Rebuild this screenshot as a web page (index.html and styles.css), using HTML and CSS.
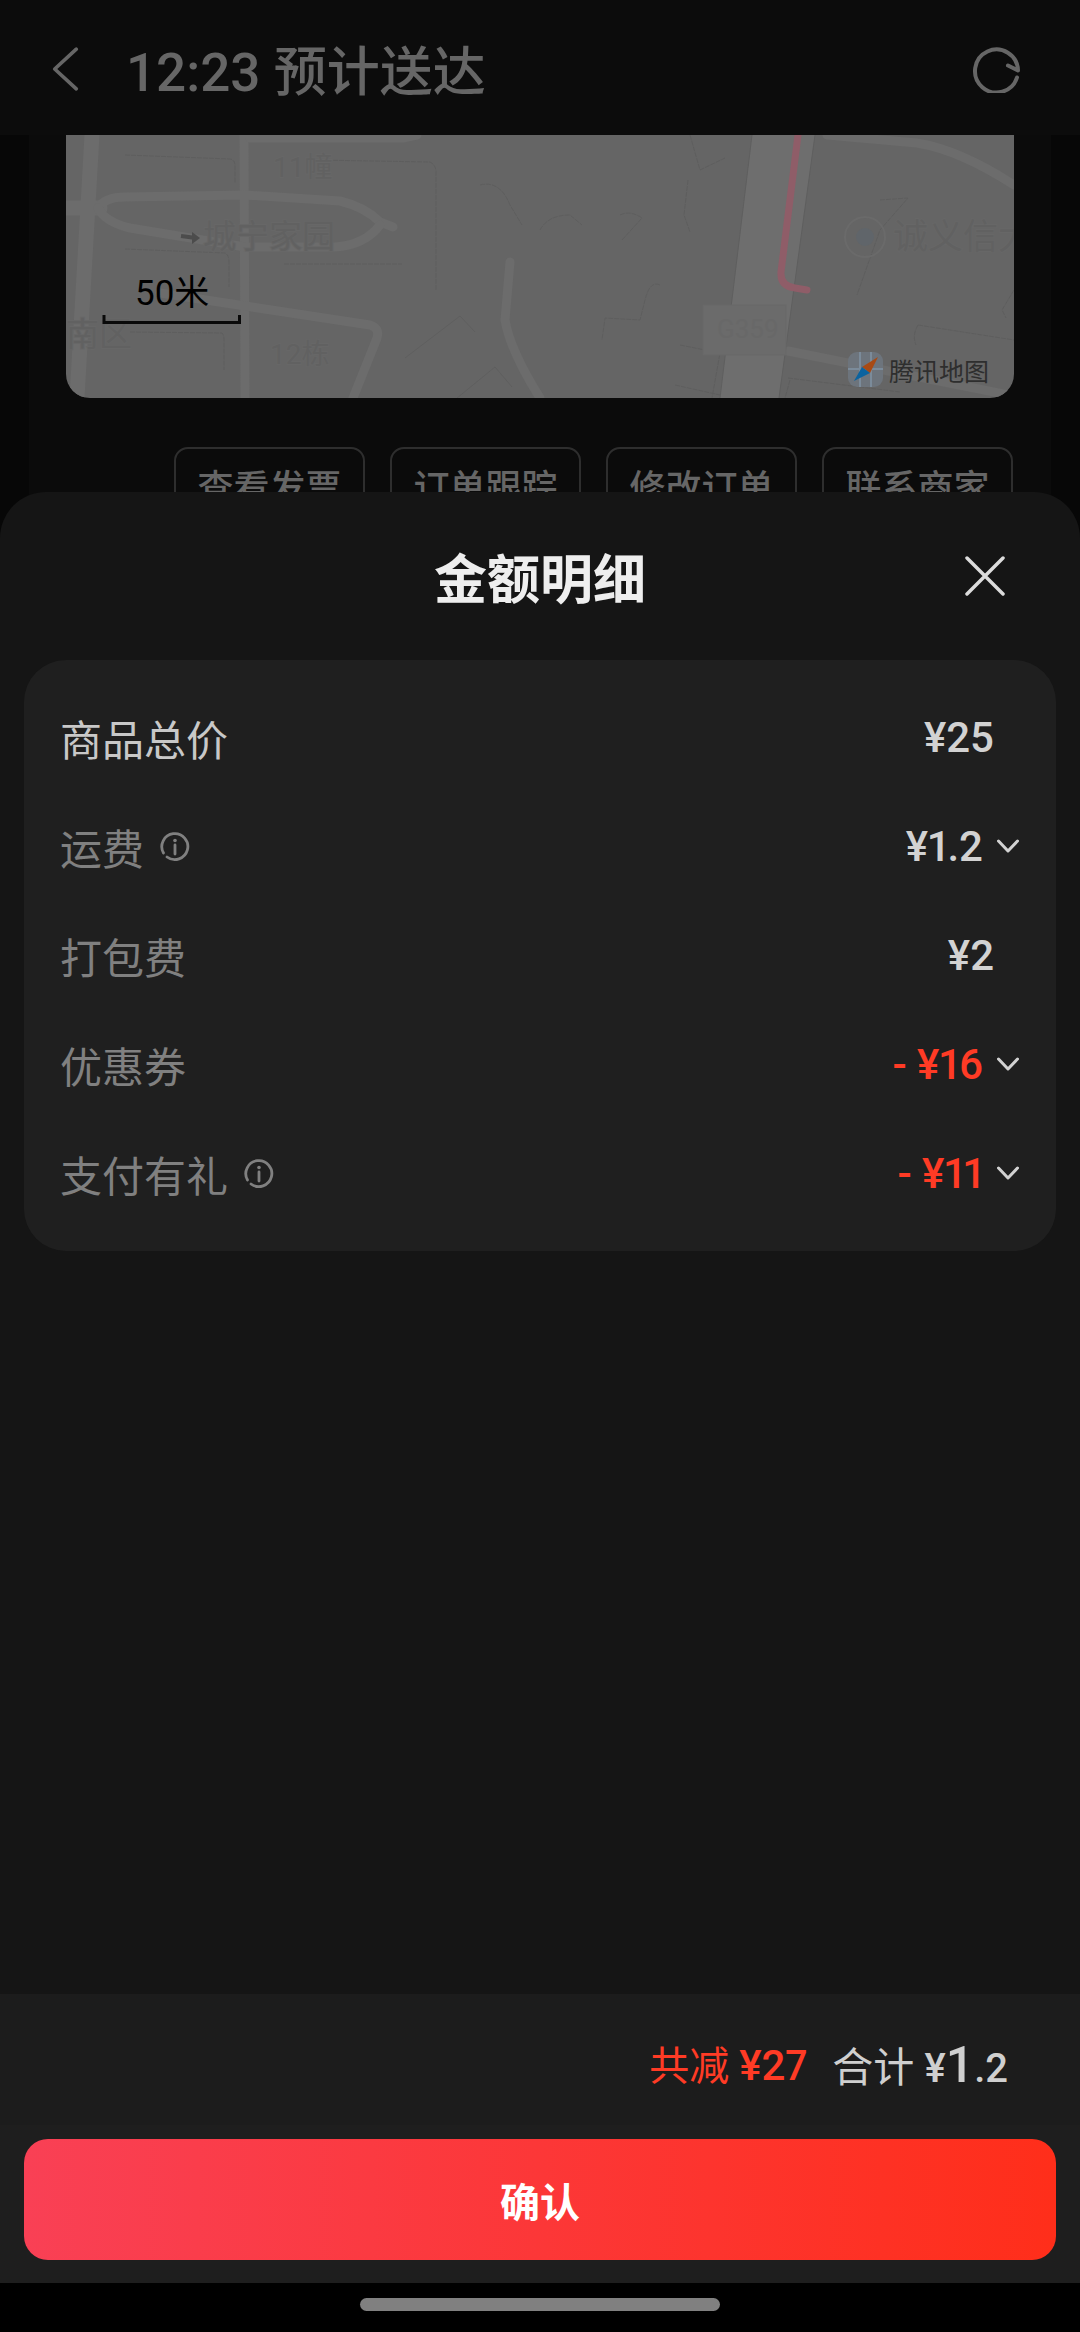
FILE: index.html
```html
<!DOCTYPE html>
<html lang="zh-CN">
<head>
<meta charset="utf-8">
<title>金额明细</title>
<link rel="stylesheet" href="styles.css">
</head>
<body>
<div class="screen">
  <div class="stage">
    <div class="backdrop">
      <header class="topbar">
        <svg class="back-icon" viewBox="0 0 30 50"><path class="ic-dim" d="M27 3 3 25l24 22"/></svg>
        <h1 class="topbar-title">12:23 预计送达</h1>
        <svg class="refresh-icon" viewBox="0 0 50 50"><path class="ic-dim" d="M45 34.500A21.500 21.500 0 1 1 46 27.500L36 22.500"/></svg>
      </header>
      <div class="order-card">
        <svg class="map" viewBox="66 135 948 263">
          <rect class="m-base" x="66" y="135" width="948" height="263"/>
          <polygon class="m-fill" points="752,135 815,135 779,398 720,398"/>
          <g class="m-road w14">
            <path d="M92 135 77 398"/>
            <path d="M66 208H100"/>
          </g>
          <g class="m-road w10">
            <path d="M244 135 245 398"/>
            <path d="M98 208Q105 197 125 197L245 195 340 201Q365 207 380 222L393 227"/>
            <path d="M98 208Q105 222 130 228L245 247H335Q365 245 380 225"/>
            <path d="M160 293 370 325Q380 328 377 338L353 398"/>
            <path d="M510 262 505 320Q510 350 540 398"/>
            <path d="M827 135 917 143Q960 150 1014 185"/>
            <path d="M788 351 1014 396"/>
            <path d="M250 138H403L417 135"/>
          </g>
          <g class="m-line">
            <path d="M752 135 720 398M815 135 779 398"/>
            <path d="M405 358 460 316 475 332M457 398 495 367 512 387"/>
          </g>
          <g class="m-edge">
            <path d="M125 155 230 159Q235 160 235 165V183"/>
            <path d="M315 160 430 162Q436 165 436 172V290"/>
            <path d="M125 249 225 253Q229 255 229 262V287"/>
            <path d="M284 264H402"/>
            <path d="M130 332 222 333Q224 335 224 340V370"/>
            <path d="M480 185Q500 180 510 205L522 225"/>
            <path d="M540 230Q548 215 570 215L582 225"/>
            <path d="M690 135 700 170 725 158M688 180 684 215 690 232"/>
            <path d="M620 215Q630 210 642 218L622 240"/>
            <path d="M660 285Q650 280 645 300L640 320 605 318 602 340"/>
            <path d="M680 345 720 353 712 398M675 385 720 395"/>
            <path d="M880 200 908 198 880 230 857 295"/>
            <path d="M918 325 1014 340M918 325Q912 335 916 345"/>
            <path d="M788 378 900 392M790 380 785 398"/>
            <path d="M1014 290 1002 310 1006 318"/>
          </g>
          <rect class="m-shield" x="703" y="305" width="83" height="50"/>
          <g class="m-label">
            <text class="f28" x="273" y="177">11幢</text>
            <text class="f34" x="203" y="248">城宁家园</text>
            <text class="f34" x="66" y="346">南区</text>
            <text class="f28" x="270" y="364">12栋</text>
            <text class="f36" x="893" y="249">诚义信大</text>
            <text class="f26 m-label-road" x="717" y="338">G359</text>
          </g>
          <circle class="m-poi" cx="865" cy="237" r="20"/>
          <circle class="m-poi-core" cx="865" cy="237" r="9"/>
          <path class="m-route" d="M798 135 781 272Q780 286 795 288L807 290"/>
          <path class="m-arrow" d="M181 236 196 238"/>
          <polygon class="m-arrow-head" points="192,232 200,238 192,244"/>
          <text class="m-scale-text" x="135" y="305">50米</text>
          <path class="m-scale-bar" d="M104 315V322.500H239.500V315"/>
          <rect class="m-logo-bg" x="848" y="352" width="35" height="35" rx="9"/>
          <path class="m-logo-grid" d="M848 369H883M860 352V387M871 352V387"/>
          <polygon class="m-logo-orange" points="878,357 862,367 870,373"/>
          <polygon class="m-logo-blue" points="854,381 862,367 870,373"/>
          <text class="m-brand" x="889" y="381">腾讯地图</text>
        </svg>
        <div class="actions">
          <button class="action">查看发票</button>
          <button class="action">订单跟踪</button>
          <button class="action">修改订单</button>
          <button class="action">联系商家</button>
        </div>
      </div>
    </div>

    <section class="sheet">
      <div class="sheet-head">
        <span></span>
        <h2 class="sheet-title">金额明细</h2>
        <svg class="close-icon" viewBox="0 0 40 40"><path d="M2 2 38 38M38 2 2 38"/></svg>
      </div>
      <div class="panel">
        <div class="row row-plain">
          <span class="label label-strong">商品总价</span>
          <span class="value">¥25</span>
        </div>
        <div class="row">
          <span class="label">运费<svg class="info" viewBox="0 0 30 30"><path class="info-ring" d="M7 25A13 13 0 1 0 3.500 21"/><path class="info-i" d="M15 13V22"/><circle class="info-dot" cx="15" cy="8.500" r="1.800"/></svg></span>
          <span class="value-wrap"><span class="value">¥1.2</span><svg class="chev" viewBox="0 0 22 14"><path d="M1.500 2 11 12 20.500 2"/></svg></span>
        </div>
        <div class="row row-plain">
          <span class="label">打包费</span>
          <span class="value">¥2</span>
        </div>
        <div class="row">
          <span class="label">优惠券</span>
          <span class="value-wrap"><span class="value value-red">- ¥16</span><svg class="chev" viewBox="0 0 22 14"><path d="M1.500 2 11 12 20.500 2"/></svg></span>
        </div>
        <div class="row">
          <span class="label">支付有礼<svg class="info" viewBox="0 0 30 30"><path class="info-ring" d="M7 25A13 13 0 1 0 3.500 21"/><path class="info-i" d="M15 13V22"/><circle class="info-dot" cx="15" cy="8.500" r="1.800"/></svg></span>
          <span class="value-wrap"><span class="value value-red">- ¥11</span><svg class="chev" viewBox="0 0 22 14"><path d="M1.500 2 11 12 20.500 2"/></svg></span>
        </div>
      </div>
      <footer class="footer">
        <div class="summary">
          <span class="saved">共减 <b class="saved-num">¥27</b></span>
          <span class="total">合计 <span class="total-num">¥<span class="total-big">1</span>.2</span></span>
        </div>
        <div class="cta-wrap">
          <button class="cta">确认</button>
        </div>
      </footer>
    </section>
  </div>
  <div class="navbar"><span class="home-indicator"></span></div>
</div>
</body>
</html>
```
FILE: styles.css
```css
* { box-sizing: border-box; }
html, body { margin: 0; padding: 0; background: #000; }
body {
  width: 1080px;
  height: 2332px;
  overflow: hidden;
  font-family: Roboto, "Noto Sans CJK SC", sans-serif;
}
.screen { width: 1080px; height: 2332px; display: flex; flex-direction: column; }
.stage { position: relative; flex: 1; overflow: hidden; background: #070707; }
.navbar { height: 49px; background: #000; display: flex; justify-content: center; padding-top: 15px; }
.home-indicator { width: 360px; height: 13px; border-radius: 7px; background: #808080; }

/* dimmed page behind the sheet */
.topbar {
  height: 135px;
  background: #0c0c0c;
  display: flex;
  align-items: center;
  padding: 0 58px 0 52px;
}
.back-icon { width: 27px; height: 48px; flex: none; margin-top: 3px; }
.topbar-title {
  margin: 10px 0 0 47px;
  flex: 1;
  font-size: 53px;
  line-height: 68px;
  font-weight: 500;
  color: #666;
}
.refresh-icon { width: 50px; height: 50px; flex: none; }
.ic-dim { fill: none; stroke: #666; stroke-width: 4; stroke-linecap: round; stroke-linejoin: round; }

.order-card { margin: 0 29px 0 29px; padding: 0 37px; background: #0b0b0b; height: 400px; }
.map { display: block; width: 948px; height: 263px; border-radius: 0 0 24px 24px; }
.m-base { fill: #656565; }
.m-fill { fill: #6e6e6e; }
.m-road path { fill: none; stroke: #6c6c6c; stroke-linecap: round; stroke-linejoin: round; }
.w14 path { stroke-width: 15; }
.w10 path { stroke-width: 9; }
.m-line path { fill: none; stroke: #5f5f5f; stroke-width: 1; }
.m-edge path { fill: none; stroke: #5e5e5e; stroke-width: 1; stroke-dasharray: 5 1; }
.m-label text {
  fill: #616161;
  stroke: #676767;
  stroke-width: 2px;
  paint-order: stroke;
  font-family: Roboto, "Noto Sans CJK SC", sans-serif;
}
.m-label .m-label-road { fill: #686868; stroke: none; }
.f26 { font-size: 26px; }
.f28 { font-size: 28px; }
.f34 { font-size: 33px; }
.f36 { font-size: 35px; }
.m-shield { fill: #6b6b6b; stroke: #696969; stroke-width: 1; }
.m-poi { fill: none; stroke: #6a6a6a; stroke-width: 2; }
.m-poi-core { fill: #60656a; }
.m-route { fill: none; stroke: #8f5d68; stroke-width: 7; stroke-linecap: round; stroke-linejoin: round; }
.m-arrow { fill: none; stroke: #4c4c4c; stroke-width: 4; }
.m-arrow-head { fill: #4c4c4c; }
.m-scale-text { fill: #000; font-size: 35px; font-family: Roboto, "Noto Sans CJK SC", sans-serif; }
.m-scale-bar { fill: none; stroke: #0a0a0a; stroke-width: 3; }
.m-logo-bg { fill: #6d747c; }
.m-logo-grid { fill: none; stroke: #7b8b9a; stroke-width: 2; }
.m-logo-orange { fill: #a84a14; }
.m-logo-blue { fill: #0b639f; }
.m-brand { fill: #2e2e2e; font-size: 25px; font-family: "Noto Sans CJK SC", sans-serif; }

.actions { display: flex; justify-content: flex-end; gap: 25px; margin: 49px 1px 0 0; }
.action {
  width: 191px;
  height: 76px;
  padding: 0;
  background: transparent;
  border: 2px solid #2e2e2e;
  border-radius: 14px;
  color: #666;
  font-family: "Noto Sans CJK SC", sans-serif;
  font-size: 36px;
  font-weight: 500;
}

/* bottom sheet */
.sheet {
  position: absolute;
  top: 492px;
  left: 0;
  right: 0;
  bottom: 0;
  display: flex;
  flex-direction: column;
  background: #151515;
  border-radius: 46px 46px 0 0;
}
.sheet-head {
  height: 168px;
  flex: none;
  display: grid;
  grid-template-columns: 1fr auto 1fr;
  align-items: center;
  padding: 0 75px;
}
.sheet-title {
  margin: 0;
  font-family: "Noto Sans CJK SC", sans-serif;
  font-size: 53px;
  line-height: 68px;
  font-weight: 700;
  color: #eee;
}
.close-icon { width: 40px; height: 40px; justify-self: end; }
.close-icon path { fill: none; stroke: #dcdcdc; stroke-width: 3.500; stroke-linecap: round; }

.panel {
  margin: 0 24px;
  padding: 27px 37px 19px 36px;
  height: 591px;
  flex: none;
  background: #1f1f1f;
  border-radius: 42px;
}
.row { height: 109px; display: flex; align-items: center; justify-content: space-between; }
.row-plain { padding-right: 25px; }
.label {
  display: flex;
  align-items: center;
  margin-bottom: 8px;
  font-family: "Noto Sans CJK SC", sans-serif;
  font-size: 42px;
  line-height: 56px;
  color: #808080;
}
.label-strong { color: #c8c8c8; }
.info { width: 30px; height: 30px; margin: 1px 0 0 16px; }
.info-ring, .info-i { fill: none; stroke: #808080; stroke-width: 2.800; stroke-linecap: round; }
.info-dot { fill: #808080; }
.value-wrap { display: flex; align-items: center; gap: 14px; }
.value {
  font-size: 42px;
  line-height: 56px;
  font-weight: 500;
  font-feature-settings: "pnum";
  color: #d2d2d2;
  margin-bottom: 8px;
}
.value-red { color: #ff3b25; }
.chev { width: 22px; height: 14px; margin-bottom: 10px; }
.chev path { fill: none; stroke: #d2d2d2; stroke-width: 3; stroke-linecap: round; stroke-linejoin: round; }

.footer { margin-top: auto; flex: none; }
.summary {
  height: 131px;
  background: #1c1c1c;
  display: flex;
  justify-content: flex-end;
  align-items: center;
  gap: 25px;
  padding: 14px 72px 0 0;
  font-size: 41px;
  line-height: 56px;
}
.saved { color: #ff3b25; font-size: 40px; font-family: Roboto, "Noto Sans CJK SC", sans-serif; }
.saved-num { font-size: 42px; font-weight: 500; font-feature-settings: "pnum"; }
.total { color: #cfcfcf; }
.total-num { font-size: 40px; font-weight: 500; }
.total-big { font-size: 50px; }
.cta-wrap { background: #1e1e1e; padding: 14px 24px 23px; }
.cta {
  display: block;
  width: 100%;
  height: 121px;
  padding: 0;
  border: 0;
  border-radius: 24px;
  background: linear-gradient(90deg, #f94055, #ff2e1a);
  color: #fff;
  font-family: "Noto Sans CJK SC", sans-serif;
  font-size: 40px;
  font-weight: 700;
}
```
